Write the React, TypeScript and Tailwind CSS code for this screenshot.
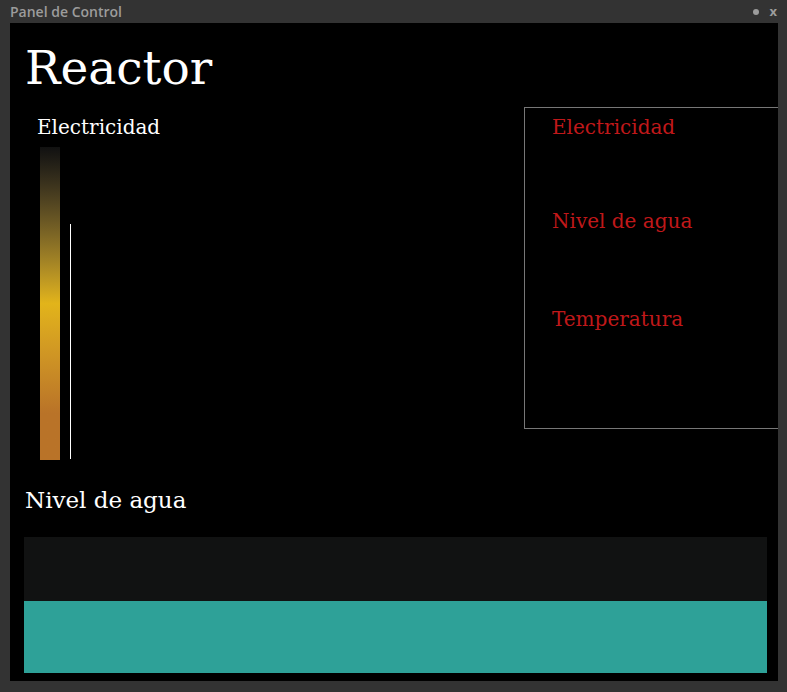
import React from 'react';

const slab = { fontFamily: '"DejaVu Serif", "Liberation Serif", serif' };

function ElectricityGauge() {
  return (
    <div className="w-[200px] pl-[27px] pt-[8px]">
      <p className="text-[20px] leading-[24px] text-white" style={slab}>
        Electricidad
      </p>
      <div className="mt-[8px] flex items-end gap-[10px] pl-[3px]">
        <div className="h-[313px] w-[20px] bg-gradient-to-b from-[#111111] via-[#e2b41a] via-50% to-[#b97328] to-85%" />
        <div className="mb-px h-[235px] w-px bg-white" />
      </div>
    </div>
  );
}

function StatusBox() {
  const labels = ['Electricidad', 'Nivel de agua', 'Temperatura'];
  return (
    <div className="ml-auto h-[322px] w-[280px] shrink-0 border border-[#777777] pl-[27px] pt-[7px]">
      <p className="text-[20px] leading-[24px] text-[#c0181a]" style={slab}>{labels[0]}</p>
      <p className="mt-[70px] text-[20px] leading-[24px] text-[#c0181a]" style={slab}>{labels[1]}</p>
      <p className="mt-[74px] text-[20px] leading-[24px] text-[#c0181a]" style={slab}>{labels[2]}</p>
    </div>
  );
}

export default function App() {
  const waterLevel = 53;
  return (
    <div className="flex h-[692px] w-[787px] flex-col bg-[#333333]">
      <div className="flex h-[23px] items-center justify-between pl-[10px] pr-[10px]">
        <span className="text-[14px] font-semibold text-[#9c9c9c]" style={{ fontFamily: '"Open Sans", sans-serif' }}>
          Panel de Control
        </span>
        <span className="flex items-center gap-[10px] text-[13px] font-bold text-[#9c9c9c]" style={{ fontFamily: '"Open Sans", sans-serif' }}>
          <span className="h-[6px] w-[6px] rounded-full bg-[#9c9c9c]" />
          x
        </span>
      </div>
      <div className="ml-[10px] h-[658px] w-[768px] overflow-hidden bg-black">
        <h1 className="pl-[15px] pt-[19px] text-[47px] leading-[52px] text-white" style={slab}>
          Reactor
        </h1>
        <div className="mt-[13px] flex w-[794px]">
          <ElectricityGauge />
          <StatusBox />
        </div>
        <p className="mt-[26px] pl-[15px] text-[23px] leading-[28px] text-white" style={slab}>
          Nivel de agua
        </p>
        <div className="ml-[14px] mr-[11px] mt-[23px] flex h-[136px] flex-col justify-end bg-[#111212]">
          <div className="bg-[#2ea198]" style={{ height: `${waterLevel}%` }} />
        </div>
      </div>
    </div>
  );
}
